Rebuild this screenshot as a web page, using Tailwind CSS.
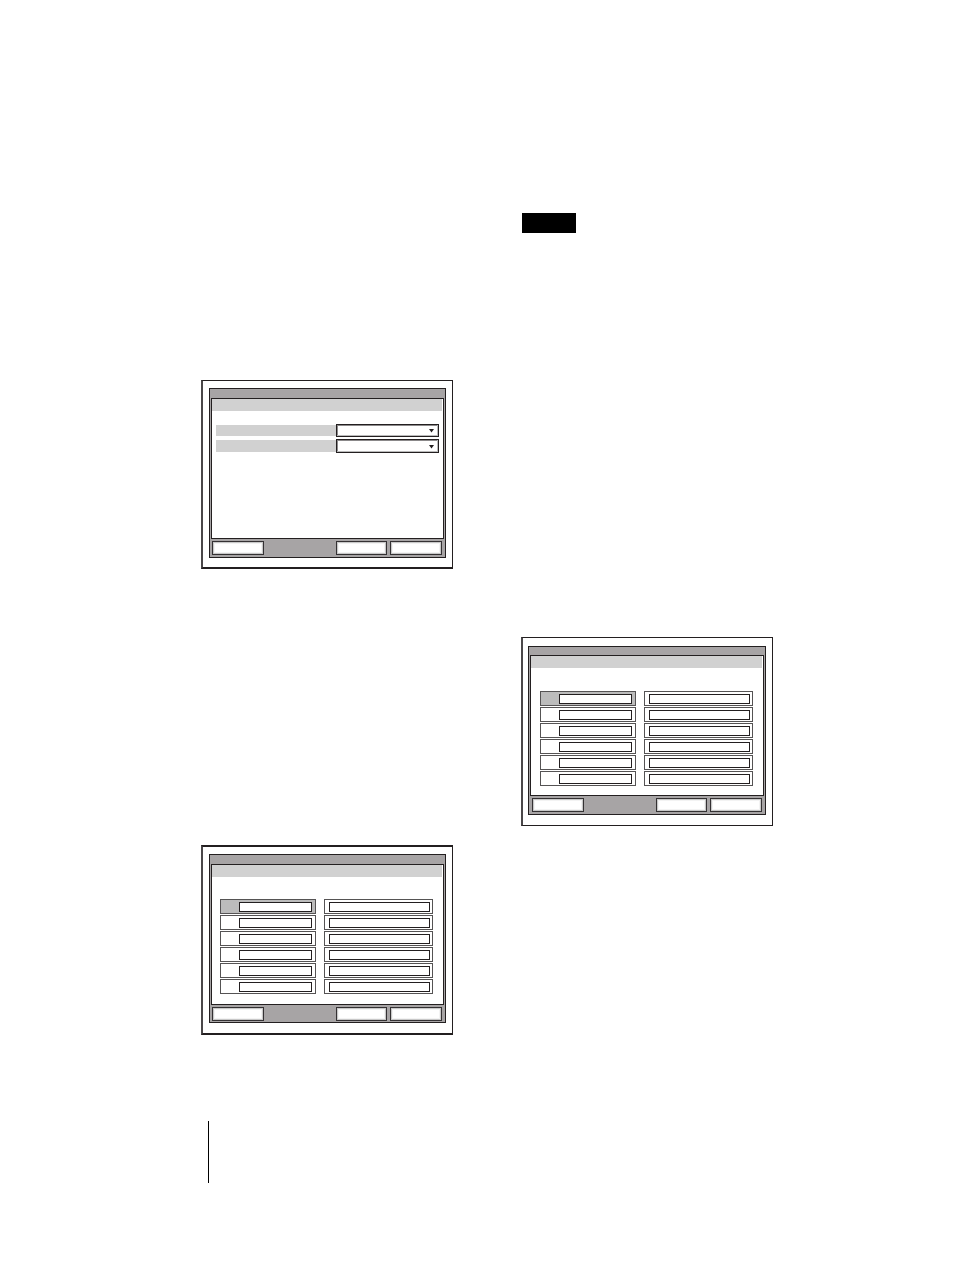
<!DOCTYPE html>
<html lang="en">
<head>
<meta charset="utf-8">
<meta name="viewport" content="width=device-width, initial-scale=1">
<title>Setup screens</title>
<script src="https://cdn.jsdelivr.net/npm/@tailwindcss/browser@4"></script>
</head>
<body class="bg-white font-['Liberation_Sans',sans-serif] text-[#231f20]">
<main class="grid grid-cols-2 gap-x-[68px] pr-[181px] pl-[201px] pb-[86px]">
  <div class="flex flex-col pt-[380px]">
    <section aria-label="Selection screen" class="border border-b-2 border-l-2 border-[#231f20] border-l-[#4a4749] pt-[7px] pr-1.5 pb-[9px] pl-1.5">
      <div class="border border-[#231f20] bg-[#a7a4a5] px-px pt-[9px] pb-0.5">
        <div class="h-[141px] border border-[#231f20] bg-white">
          <header class="mr-px h-3 bg-[#d1d1d1]"></header>
          <form class="flex flex-col gap-0.5 pt-[13px] pr-1 pl-1">
            <div class="flex items-center">
              <label for="first" class="h-[11px] flex-1 bg-[#d1d1d1]"></label>
              <div class="relative h-[13px] w-[103px]">
                <select id="first" aria-label="First setting" class="block size-full appearance-none border border-[#231f20] bg-white shadow-[inset_-1px_-1px_0_#bbbbbb,inset_1px_1px_0_#8b898a]"></select>
                <svg class="pointer-events-none absolute top-[5px] right-[5px]" width="5" height="4" viewBox="0 0 5 4"><path d="M0 0h5L2.500 3.500z" fill="#231f20"/></svg>
              </div>
            </div>
            <div class="flex items-center">
              <label for="second" class="h-3 flex-1 bg-[#d1d1d1]"></label>
              <div class="relative h-[14px] w-[103px]">
                <select id="second" aria-label="Second setting" class="block size-full appearance-none border border-[#231f20] bg-white shadow-[inset_-1px_-1px_0_#bbbbbb,inset_1px_1px_0_#8b898a]"></select>
                <svg class="pointer-events-none absolute top-[6px] right-[5px]" width="5" height="4" viewBox="0 0 5 4"><path d="M0 0h5L2.500 3.500z" fill="#231f20"/></svg>
              </div>
            </div>
          </form>
        </div>
        <footer data-buttons class="flex gap-[3px] pt-0.5 pr-0.5 pl-px"></footer>
      </div>
    </section>

    <section aria-label="List screen" class="mt-[276px] border-y-2 border-r border-l-2 border-[#231f20] border-l-[#4a4749] pt-[7px] pr-1.5 pb-2.5 pl-1.5">
      <div class="border border-[#231f20] bg-[#a7a4a5] px-px pt-[9px] pb-px">
        <div class="h-[141px] border border-[#231f20] bg-white">
          <header class="mr-px h-3 bg-[#d1d1d1]"></header>
          <ul data-rows class="flex flex-col gap-px pt-[22px] pr-2.5 pl-2"></ul>
        </div>
        <footer data-buttons class="flex gap-[3px] pt-0.5 pr-0.5 pl-px"></footer>
      </div>
    </section>
    <div class="mt-[86px] ml-[7px] h-[62px] w-px bg-black"></div>
  </div>

  <div class="flex flex-col pt-[213px]">
    <div class="ml-px h-5 w-[54px] bg-black"></div>
    <section aria-label="Edit screen" class="mt-[404px] border border-l-2 border-[#231f20] border-l-[#4a4749] pt-2 pr-1.5 pb-2.5 pl-[5px]">
      <div class="border border-[#231f20] bg-[#a7a4a5] px-px pt-2 pb-0.5">
        <div class="h-[141px] border border-[#231f20] bg-white">
          <header class="mr-px h-3 bg-[#d1d1d1]"></header>
          <ul data-rows class="flex flex-col gap-px pt-[23px] pr-2.5 pl-[9px]"></ul>
        </div>
        <footer data-buttons class="flex gap-[3px] pt-0.5 pr-0.5 pl-0.5"></footer>
      </div>
    </section>
  </div>
</main>
<script>
const button = (label, cls) => `<button type="button" aria-label="${label}" class="h-[14px] border border-[#343133] bg-white shadow-[inset_0_0_0_1px_#c8c8c8,inset_0_0_0_2px_#f3f3f3] ${cls}"></button>`;
document.querySelectorAll('[data-buttons]').forEach(f => {
  f.innerHTML = button('Left', 'mr-auto w-[52px]') + button('Middle', 'w-[51px]') + button('Right', 'w-[52px]');
});
document.querySelectorAll('[data-rows]').forEach(list => {
  for (let i = 1; i <= 6; i++) {
    const fill = i === 1 ? 'bg-[#bcbcbc]' : 'bg-white';
    list.insertAdjacentHTML('beforeend', `<li class="flex gap-2">
      <div class="flex h-[15px] w-24 items-start border border-[#555354] pt-0.5 pr-[3px] pl-[18px] ${fill}">
        <input aria-label="Name ${i}" class="h-2.5 w-full min-w-0 border border-[#231f20] bg-white">
      </div>
      <div class="flex h-[15px] min-w-0 flex-1 items-start border border-[#555354] pt-0.5 pr-0.5 pl-1">
        <input aria-label="Value ${i}" class="h-2.5 w-full min-w-0 border border-[#231f20] bg-white">
      </div>
    </li>`);
  }
});
</script>
</body>
</html>
